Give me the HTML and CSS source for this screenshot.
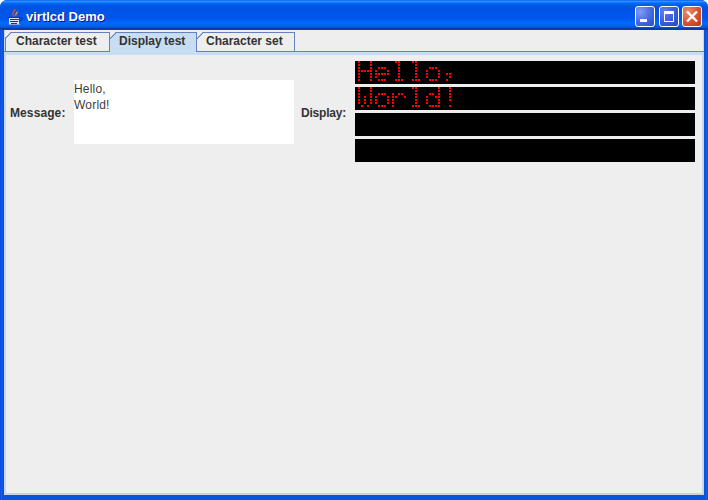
FILE: index.html
```html
<!DOCTYPE html>
<html lang="en">
<head>
<meta charset="utf-8">
<title>virtlcd Demo</title>
<link rel="stylesheet" href="styles.css">
</head>
<body>
<div class="window">
  <header class="titlebar">
    <svg class="app-icon" width="16" height="16" viewBox="0 0 16 16" aria-hidden="true">
      <path d="M7.500 0c1.500 2-2.500 3-1.500 5.500.3.800 1 1 1 2" fill="none" stroke="#d9482a" stroke-width="1.600"/>
      <path d="M10 2.500c.8 1.500-2 2-1 4" fill="none" stroke="#ee8a4a" stroke-width="1.400"/>
      <path d="M2 8h10v7H2z" fill="#dfe4ff"/>
      <path d="M1 8.500h12M3 10.500h9M3 12.500h8M4 14.500h6" stroke="#2a2a8c" stroke-width="1"/>
      <path d="M12.500 9h1.800c1 0 1 2.500-.5 2.800l-2 .5" fill="none" stroke="#1e2a7a" stroke-width="1"/>
      <path d="M2 15.500h11" stroke="#8f9ce0" stroke-width="1"/>
    </svg>
    <span class="title">virtlcd Demo</span>
    <div class="controls">
      <div class="ctl">
        <svg width="18" height="19" viewBox="0 0 18 19" aria-hidden="true"><path d="M4 12h7v3H4z" fill="#fff"/></svg>
      </div>
      <div class="ctl ctl-max">
        <svg width="18" height="19" viewBox="0 0 18 19" aria-hidden="true"><path d="M4 4h10v11H4zM5 7v7h8V7z" fill="#fff" fill-rule="evenodd"/></svg>
      </div>
      <div class="ctl ctl-close">
        <svg width="18" height="19" viewBox="0 0 18 19" aria-hidden="true"><path d="M4 4.500l10 10M14 4.500L4 14.500" stroke="#fff" stroke-width="2.400" fill="none"/></svg>
      </div>
    </div>
  </header>
  <div class="client">
    <nav class="tabs">
      <div class="tab tab-first">Character test</div>
      <div class="tab tab-active">Display test</div>
      <div class="tab tab-last">Character set</div>
    </nav>
    <main class="panel">
      <section class="row">
        <label class="label label-msg">Message:</label>
        <div class="message">Hello,<br>World!</div>
        <label class="label label-disp">Display:</label>
        <div class="display">
          <div class="lcd" data-text="Hello,"></div>
          <div class="lcd" data-text="World!"></div>
          <div class="lcd" data-text=""></div>
          <div class="lcd" data-text=""></div>
        </div>
      </section>
    </main>
  </div>
</div>
<script src="lcd.js"></script>
</body>
</html>
```

FILE: styles.css
```css
html, body {
  margin: 0;
  padding: 0;
  background: #fff;
}
.window {
  width: 708px;
  height: 500px;
  display: flex;
  flex-direction: column;
  box-sizing: border-box;
  overflow: hidden;
  border-radius: 7px 7px 0 0;
  background: linear-gradient(90deg, #0831d9 0, #166aee 1px, #0855dd 2px, #0855dd 706px, #166aee 707px, #0831d9 708px);
  font-family: "Liberation Sans", Arial, sans-serif;
}
.titlebar {
  height: 30px;
  flex: none;
  display: flex;
  align-items: center;
  padding: 0 6px 0 7px;
  box-sizing: border-box;
  background: linear-gradient(180deg, #0058ee 0%, #3593ff 4%, #288eff 6%, #127dff 8%, #036ffc 10%, #0262ee 14%, #0057e5 20%, #0054e3 24%, #0055eb 56%, #005bf5 66%, #026afe 76%, #0062ef 86%, #0052d6 92%, #0040ab 94%, #0040ab 100%);
}
.app-icon {
  flex: none;
  margin-top: 3px;
}
.title {
  margin-left: 3px;
  margin-top: 3px;
  font-size: 13px;
  font-weight: bold;
  color: #fff;
  text-shadow: 1px 1px 0 #0f1089;
}
.controls {
  margin-left: auto;
  margin-top: 3px;
  display: flex;
}
.ctl {
  width: 20px;
  height: 21px;
  box-sizing: border-box;
  border: 1px solid #fff;
  border-radius: 3px;
  background: radial-gradient(circle at 25% 25%, #7f9cf2 0%, #4468e0 55%, #2a4cc8 100%);
}
.ctl svg {
  display: block;
}
.ctl-max {
  margin-left: 4px;
  background: radial-gradient(circle at 25% 25%, #5f80ea 0%, #3a5cd8 55%, #2646c4 100%);
}
.ctl-close {
  margin-left: 3px;
  background: radial-gradient(circle at 25% 25%, #eb8e6e 0%, #d9512c 55%, #bb3a18 100%);
}
.client {
  flex: 1;
  display: flex;
  flex-direction: column;
  margin: 0 4px 5px;
  min-height: 0;
  background: #eeeeee;
  padding-top: 2px;
  box-shadow: inset 1px 0 0 #c8d6ea, inset -1px 0 0 #c8d6ea;
}
.tabs {
  display: flex;
  align-items: flex-start;
  height: 20px;
  flex: none;
  padding-left: 1px;
}
.tab {
  position: relative;
  flex: none;
  box-sizing: border-box;
  height: 19px;
  padding: 0 0 0 9px;
  line-height: 17px;
  font-size: 12px;
  font-weight: bold;
  color: #333;
  background: #eeeeee;
  border: solid #6382bf;
  border-width: 1px 1px 0 0;
  clip-path: polygon(6px 0, 100% 0, 100% 100%, 0 100%, 0 6px);
}
.tab::before {
  content: "";
  position: absolute;
  left: 0;
  top: -1px;
  width: 7px;
  height: 7px;
  background: linear-gradient(135deg, transparent 42%, #6382bf 42%, #6382bf 56%, transparent 56%);
}
.tab-first {
  width: 105px;
  border-left: 1px solid #6382bf;
  padding-left: 10px;
}
.tab-first::before {
  left: -1px;
}
.tab-active {
  width: 87px;
  height: 20px;
  word-spacing: -1px;
  background: #c8ddf2;
}
.tab-last {
  width: 98px;
}
.panel {
  flex: 1;
  min-height: 0;
  border-top: 1px solid #6382bf;
  padding: 9px 8px 0 6px;
  background: linear-gradient(180deg, #c8ddf2 0, #c8ddf2 3px, #eeeeee 3px);
  box-shadow: inset 2px 0 0 #c8d6ea, inset -2px 0 0 #c8d6ea, inset 0 -2px 0 #c8d2e2;
  margin-top: -1px;
}
.row {
  display: flex;
  align-items: center;
}
.label {
  font-size: 12px;
  font-weight: bold;
  color: #333;
  white-space: nowrap;
  padding-top: 2px;
}
.label-msg {
  width: 56px;
  margin-right: 8px;
  letter-spacing: 0.1px;
}
.label-disp {
  width: 45px;
  margin-left: 7px;
  margin-right: 9px;
  letter-spacing: -0.2px;
}
.message {
  width: 220px;
  height: 64px;
  box-sizing: border-box;
  background: #fff;
  font-size: 12px;
  line-height: 16px;
  letter-spacing: 0.2px;
  padding-top: 1px;
  color: #3c3c3c;
}
.display {
  display: flex;
  flex-direction: column;
  gap: 3px;
}
.lcd {
  width: 340px;
  height: 23px;
  background: #000;
}
.lcd svg {
  display: block;
}
```

FILE: lcd.js
```js
// 5x7 dot-matrix character display: 17px per character, 3px per dot.
var GLYPHS = {
  H: ["X...X", "X...X", "X...X", "XXXXX", "X...X", "X...X", "X...X"],
  e: [".....", ".....", ".XXX.", "X...X", "XXXXX", "X....", ".XXX."],
  l: [".XX..", "..X..", "..X..", "..X..", "..X..", "..X..", ".XXX."],
  o: [".....", ".....", ".XXX.", "X...X", "X...X", "X...X", ".XXX."],
  ",": [".....", ".....", ".....", ".....", ".XX..", "..X..", ".X..."],
  W: ["X...X", "X...X", "X...X", "X.X.X", "X.X.X", "X.X.X", ".X.X."],
  r: [".....", ".....", "X.XX.", "XX..X", "X....", "X....", "X...."],
  d: ["....X", "....X", ".XX.X", "X..XX", "X...X", "X...X", ".XXXX"],
  "!": ["..X..", "..X..", "..X..", "..X..", "..X..", ".....", "..X.."]
};

document.querySelectorAll(".lcd").forEach(function (lcd) {
  var text = lcd.getAttribute("data-text");
  var d = "";
  for (var i = 0; i < text.length; i++) {
    var glyph = GLYPHS[text.charAt(i)];
    for (var row = 0; row < 7; row++) {
      for (var col = 0; col < 5; col++) {
        if (glyph[row].charAt(col) === "X") {
          d += "M" + (3 + i * 17 + col * 3) + " " + row * 3 + "h2v2h-2z";
        }
      }
    }
  }
  lcd.innerHTML = '<svg width="340" height="23" viewBox="0 0 340 23"><path fill="#ff0000" d="' + d + '"/></svg>';
});
```
